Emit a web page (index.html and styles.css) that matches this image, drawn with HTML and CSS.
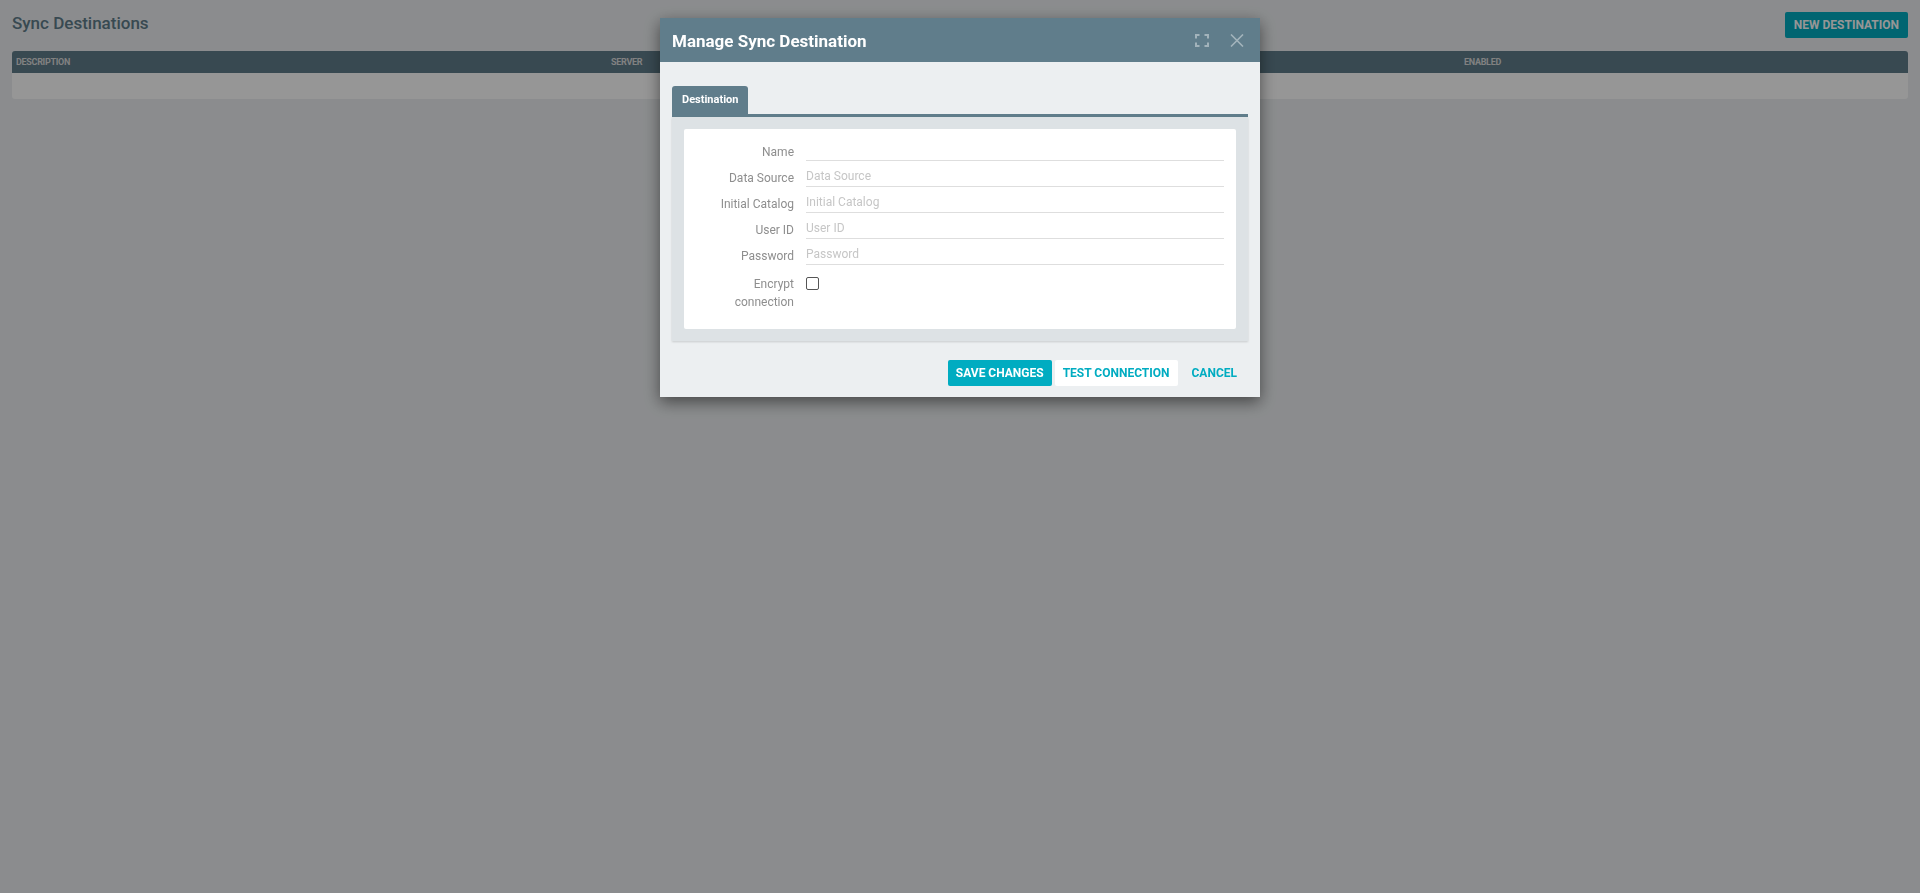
FILE: index.html
```html
<!DOCTYPE html>
<html lang="en">
<head>
  <meta charset="UTF-8">
  <title>Sync Destinations</title>
  <link rel="stylesheet" href="styles.css">
</head>
<body>
  <div class="page">
    <div class="page-head">
      <h1 class="page-title">Sync Destinations</h1>
      <button class="btn btn-fill">New Destination</button>
    </div>
    <div class="grid">
      <div class="grid-head">
        <span class="col-desc">Description</span>
        <span class="col-server">Server</span>
        <span>Enabled</span>
      </div>
      <div class="grid-row"></div>
    </div>
  </div>

  <div class="backdrop">
    <div class="dialog">
      <div class="dialog-head">
        <h2>Manage Sync Destination</h2>
        <div class="dialog-tools">
          <svg width="14" height="13" viewBox="0 0 14 13">
            <path d="M1 4.5V1h3.5M9.5 1H13v3.5M13 8.5V12H9.5M4.5 12H1V8.5" />
          </svg>
          <svg width="14" height="13" viewBox="0 0 14 13">
            <path d="M1 0.5L13 12.5M13 0.5L1 12.5" />
          </svg>
        </div>
      </div>
      <div class="dialog-body">
        <div class="tabs">
          <span class="tab">Destination</span>
        </div>
        <div class="tab-panel">
          <div class="form-card">
            <div class="form-row">
              <label>Name</label>
              <input type="text">
            </div>
            <div class="form-row">
              <label>Data Source</label>
              <input type="text" placeholder="Data Source">
            </div>
            <div class="form-row">
              <label>Initial Catalog</label>
              <input type="text" placeholder="Initial Catalog">
            </div>
            <div class="form-row">
              <label>User ID</label>
              <input type="text" placeholder="User ID">
            </div>
            <div class="form-row">
              <label>Password</label>
              <input type="password" placeholder="Password">
            </div>
            <div class="form-row form-row-check">
              <label>Encrypt connection</label>
              <input type="checkbox">
            </div>
          </div>
        </div>
      </div>
      <div class="dialog-foot">
        <button class="btn btn-fill btn-save">Save Changes</button>
        <button class="btn btn-white btn-test">Test Connection</button>
        <button class="btn btn-flat">Cancel</button>
      </div>
    </div>
  </div>
</body>
</html>
```

FILE: styles.css
```css
body {
  margin: 0;
  background: #eceff1;
  font-family: Roboto, "Liberation Sans", sans-serif;
}

/* page behind the dialog */
.page { padding: 12px; }
.page-head {
  display: flex;
  justify-content: space-between;
  align-items: flex-start;
  height: 26px;
  margin-bottom: 13px;
}
.page-title {
  margin: 1px 0 0;
  font-size: 17px;
  line-height: 20px;
  font-weight: 500;
  color: #607d8b;
}

.btn {
  height: 26px;
  padding: 0 8px;
  border: 0;
  border-radius: 2px;
  font-family: Roboto, "Liberation Sans", sans-serif;
  font-size: 12px;
  font-weight: 700;
  line-height: 26px;
  text-transform: uppercase;
  cursor: pointer;
}
.btn-fill { background: #00acc1; color: #fff; }
.btn-white { background: #fff; color: #00acc1; }
.btn-flat { background: transparent; color: #00acc1; }
.page-head .btn { padding: 0 9px; }

.grid-head {
  display: flex;
  align-items: center;
  height: 22px;
  background: #607d8b;
  border-radius: 3px 3px 0 0;
  color: #dcdcdc;
  font-size: 9px;
  font-weight: 700;
  letter-spacing: -0.3px;
  text-transform: uppercase;
}
.grid-head span { padding-left: 4px; }
.grid-head .col-desc { width: 591px; }
.grid-head .col-server { width: 849px; }
.grid-row {
  height: 26px;
  background: #fff;
  border-radius: 0 0 3px 3px;
}

/* modal */
.backdrop {
  position: fixed;
  inset: 0;
  display: flex;
  justify-content: center;
  align-items: flex-start;
  padding-top: 18px;
  background: rgba(0, 0, 0, 0.41);
}
.dialog {
  width: 600px;
  background: #eceff1;
  box-shadow: 0 5px 15px rgba(0, 0, 0, 0.5);
}
.dialog-head {
  display: flex;
  justify-content: space-between;
  align-items: center;
  height: 44px;
  padding: 0 16px 0 12px;
  background: #607d8b;
}
.dialog-head h2 {
  margin: 1px 0 0;
  color: #fff;
  font-size: 17px;
  font-weight: 700;
}
.dialog-tools {
  display: flex;
  gap: 21px;
}
.dialog-tools svg {
  fill: none;
  stroke: rgba(255, 255, 255, 0.42);
  stroke-width: 2;
}
.dialog-tools svg + svg path { stroke-width: 1.6; }

.dialog-body { padding: 24px 12px 0; }
.tabs {
  display: flex;
  border-bottom: 3px solid #607d8b;
}
.tab {
  height: 28px;
  padding: 0 10px;
  background: #607d8b;
  border-radius: 3px 3px 0 0;
  color: #fff;
  font-size: 11px;
  font-weight: 700;
  line-height: 28px;
}
.tab-panel {
  padding: 12px;
  background: #dde2e5;
  box-shadow: 0 1px 2px rgba(0, 0, 0, 0.15);
}
.form-card {
  padding: 12px 12px 18px;
  background: #fff;
  border-radius: 2px;
}
.form-row {
  display: grid;
  grid-template-columns: 98px 1fr;
  column-gap: 12px;
  margin-bottom: 6px;
}
.form-row:last-child { margin-bottom: 0; }
.form-row label {
  height: 20px;
  text-align: right;
  font-size: 12px;
  line-height: 22px;
  color: #8e8e8e;
}
.form-row input[type="text"],
.form-row input[type="password"] {
  box-sizing: border-box;
  height: 20px;
  padding: 0 0 2px;
  border: 0;
  border-bottom: 1px solid #dedede;
  font-family: Roboto, "Liberation Sans", sans-serif;
  font-size: 12px;
  color: #555;
  outline: none;
}
.form-row input::placeholder { color: #c6c6c6; }

.form-row-check label {
  height: auto;
  padding-top: 4px;
  line-height: 18px;
}
.form-row-check input {
  appearance: none;
  justify-self: start;
  width: 13px;
  height: 13px;
  margin: 6px 0 0;
  border: 1px solid #555;
  border-radius: 2px;
  background: #fff;
}

.dialog-foot {
  display: flex;
  justify-content: flex-end;
  padding: 19px 15px 11px;
}
.btn-save { margin-right: 3px; }
.btn-test { margin-right: 6px; }
```
